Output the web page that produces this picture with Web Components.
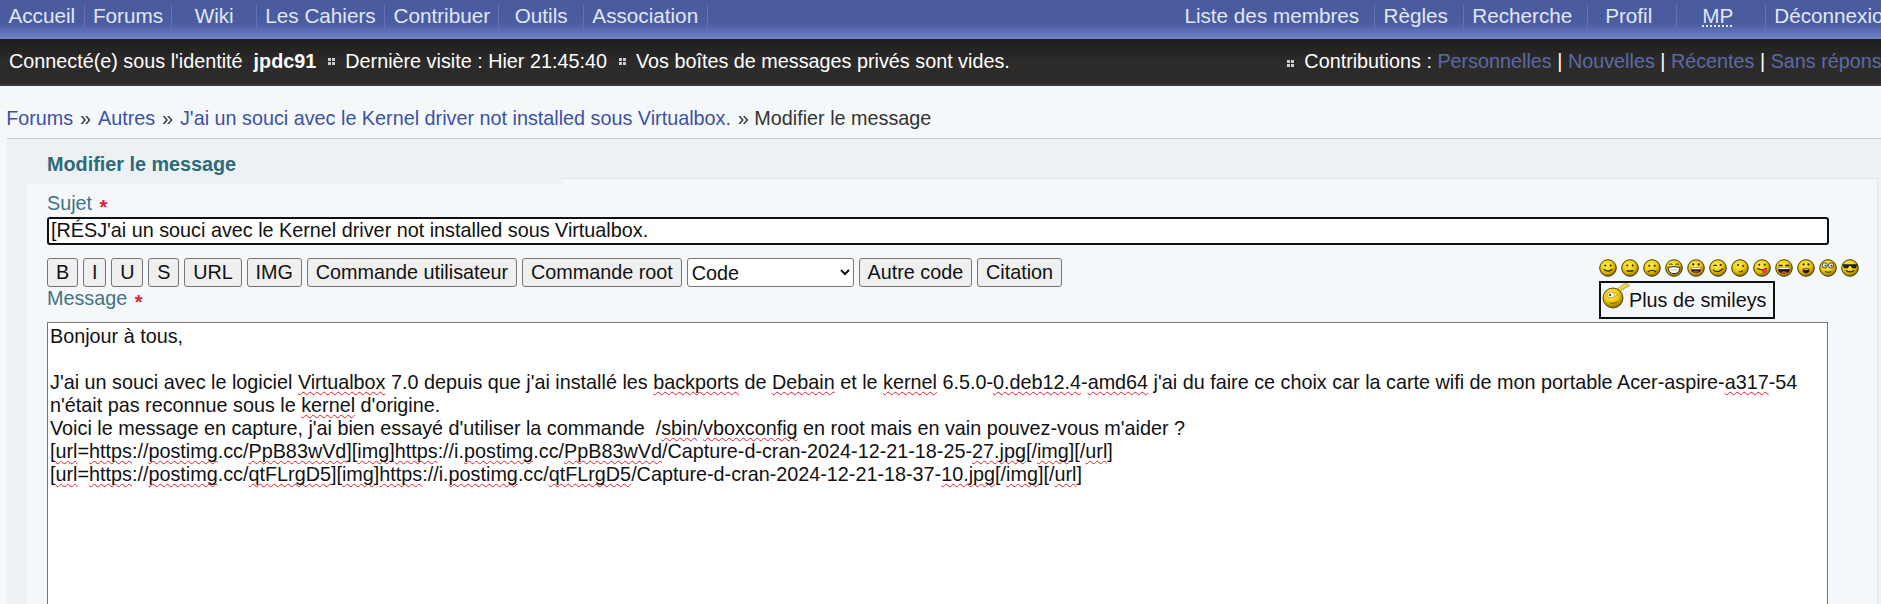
<!DOCTYPE html>
<html lang="fr">
<head>
<meta charset="utf-8">
<title>Modifier le message</title>
<style>
html, body { margin: 0; height: 604px; overflow: hidden; background: #f5f8fb; }
body { font: 19.8px/23px "Liberation Sans", Arial, sans-serif; color: #333; }
.s { text-decoration: underline wavy #e0202a 1px; text-underline-offset: 2px; text-decoration-skip-ink: none; }
</style>
</head>
<body>

<forum-shell>
  <site-nav>
    <nav-item>Accueil</nav-item>
    <nav-item>Forums</nav-item>
    <nav-item>Wiki</nav-item>
    <nav-item>Les Cahiers</nav-item>
    <nav-item>Contribuer</nav-item>
    <nav-item>Outils</nav-item>
    <nav-item>Association</nav-item>
    <nav-item slot="right">Liste des membres</nav-item>
    <nav-item slot="right">Règles</nav-item>
    <nav-item slot="right">Recherche</nav-item>
    <nav-item slot="right">Profil</nav-item>
    <nav-item slot="right"><abbr style="text-decoration: underline dotted">MP</abbr></nav-item>
    <nav-item slot="right">Déconnexion</nav-item>
  </site-nav>

  <status-bar>
    <span>Connecté(e) sous l'identité&nbsp; <b>jpdc91</b></span>
    <status-sep></status-sep>
    <span>Dernière visite : Hier 21:45:40</span>
    <status-sep></status-sep>
    <span>Vos boîtes de messages privés sont vides.</span>
    <span slot="right"><status-sep></status-sep>Contributions : <status-link>Personnelles</status-link> | <status-link>Nouvelles</status-link> | <status-link>Récentes</status-link> | <status-link>Sans réponses</status-link></span>
  </status-bar>

  <crumb-trail>
    <crumb-link>Forums</crumb-link> » <crumb-link>Autres</crumb-link> » <crumb-link>J'ai un souci avec le Kernel driver not installed sous Virtualbox.</crumb-link> » Modifier le message
  </crumb-trail>

  <edit-panel heading="Modifier le message">
    <field-label>Sujet</field-label>
    <subject-field>[RÉSJ'ai un souci avec le Kernel driver not installed sous Virtualbox.</subject-field>
    <post-toolbar>
      <tool-button>B</tool-button>
      <tool-button>I</tool-button>
      <tool-button>U</tool-button>
      <tool-button>S</tool-button>
      <tool-button>URL</tool-button>
      <tool-button>IMG</tool-button>
      <tool-button>Commande utilisateur</tool-button>
      <tool-button>Commande root</tool-button>
      <code-select></code-select>
      <tool-button>Autre code</tool-button>
      <tool-button>Citation</tool-button>
      <field-label slot="below">Message</field-label>
      <smiley-picker slot="side"></smiley-picker>
    </post-toolbar>
    <message-box>Bonjour à tous,

J'ai un souci avec le logiciel <span class="s">Virtualbox</span> 7.0 depuis que j'ai installé les <span class="s">backports</span> de <span class="s">Debain</span> et le <span class="s">kernel</span> 6.5.0-<span class="s">0.deb12.4</span>-<span class="s">amd64</span> j'ai du faire ce choix car la carte wifi de mon portable Acer-aspire-<span class="s">a317</span>-54 n'était pas reconnue sous le <span class="s">kernel</span> d'origine.
Voici le message en capture, j'ai bien essayé d'utiliser la commande  /<span class="s">sbin</span>/<span class="s">vboxconfig</span> en root mais en vain pouvez-vous m'aider ?
[<span class="s">url</span>=<span class="s">https</span>://<span class="s">postimg</span>.cc/<span class="s">PpB83wVd</span>][<span class="s">img</span>]<span class="s">https</span>://i.<span class="s">postimg</span>.cc/<span class="s">PpB83wVd</span>/Capture-d-cran-2024-12-21-18-25-<span class="s">27.jpg</span>[/<span class="s">img</span>][/<span class="s">url</span>]
[<span class="s">url</span>=<span class="s">https</span>://<span class="s">postimg</span>.cc/<span class="s">qtFLrgD5</span>][<span class="s">img</span>]<span class="s">https</span>://i.<span class="s">postimg</span>.cc/<span class="s">qtFLrgD5</span>/Capture-d-cran-2024-12-21-18-37-<span class="s">10.jpg</span>[/<span class="s">img</span>][/<span class="s">url</span>]</message-box>
  </edit-panel>
</forum-shell>

<script>
(function(){

// small helper so every element below reads the same way
function define(name, html, extra) {
  let template = document.createElement("template");
  template.innerHTML = html.trim();
  class El extends HTMLElement {
    constructor() {
      super();
      this.attachShadow({mode: "open"});
      this.shadowRoot.append(template.content.cloneNode(true));
    }
    connectedCallback() { if (extra) extra.call(this); }
  }
  customElements.define(name, El);
}

define("forum-shell", `
<style>:host { display: block; width: 1911px; height: 604px; overflow: hidden; }</style>
<slot></slot>`);

define("site-nav", `
<style>
:host {
  display: flex; justify-content: space-between; height: 39px;
  background: linear-gradient(#4a5a9e 0, #4c5ca1 24px, #6c80c8 38px, #7488cc 39px);
}
div { display: flex; }
</style>
<div><slot></slot></div>
<div><slot name="right"></slot></div>`);

define("nav-item", `
<style>
:host {
  display: block; box-sizing: border-box; min-width: 84.5px; height: 28px; margin-top: 4px; padding: 0 8.4px;
  font-size: 20.7px; line-height: 24px; text-align: center; color: #e0e7f6;
  border-right: 1px solid #6272b0; white-space: nowrap;
}
:host([slot=right]) { min-width: 89px; padding: 0 15px 0 8px; }
:host([slot=right]:first-child) { box-shadow: -1px 0 #6272b0; }
</style>
<slot></slot>`);

define("status-bar", `
<style>
:host {
  display: flex; justify-content: space-between; align-items: center; box-sizing: border-box;
  height: 47px; padding: 0 8.4px 1px 9px; color: #fff; white-space: nowrap;
  background: linear-gradient(#1f1d1d, #2d2a2a 50%);
  border-bottom: 2px solid #3b3b42;
}
div { display: flex; align-items: center; }
</style>
<div><slot></slot></div>
<div><slot name="right"></slot></div>`);

define("status-sep", `
<style>
:host { display: inline-block; width: 7px; height: 7px; margin: 0 10px 0 0; vertical-align: 1px;
  background:
    linear-gradient(#ccc, #ccc) 0 0/3px 3px no-repeat,
    linear-gradient(#ccc, #ccc) 4px 0/3px 3px no-repeat,
    linear-gradient(#ccc, #ccc) 0 4px/3px 3px no-repeat,
    linear-gradient(#ccc, #ccc) 4px 4px/3px 3px no-repeat; }
:host(:not([slot])) { margin: 0 10px 0 12px; }
</style>`);

define("status-link", `
<style>:host { color: #5a6aa8; }</style><slot></slot>`);

define("crumb-trail", `
<style>
:host { display: block; box-sizing: border-box; height: 52px; padding: 21px 0 0 4.8px; color: #333; white-space: nowrap; }
</style>
<slot></slot>`);

define("crumb-link", `
<style>:host { color: #3c50a8; margin: 0 1.4px; }</style><slot></slot>`);

define("edit-panel", `
<style>
:host { display: block; margin-left: 7px; width: 1899px; background: #ecf1f5; border-top: 1px solid #c6ced5; }
h2 {
  box-sizing: border-box; margin: 0 0 -6px 20px; width: 536px; height: 45px; padding: 14px 0 0 20px;
  position: relative; font-size: 19.8px; line-height: 23px; color: #2e6a78; background: #ecf1f5;
}
.inner {
  box-sizing: border-box; margin-left: 20px; width: 1851px; height: 500px; padding: 13px 49px 0 20px;
  background: #f5f8fb; border-top: 1px solid #e2e7ec; border-right: 1px solid #e2e7ec;
}
</style>
<h2></h2>
<div class="inner"><slot></slot></div>`, function() {
  this.shadowRoot.querySelector("h2").textContent = this.getAttribute("heading");
});

define("field-label", `
<style>
:host { display: block; color: #3f7484; height: 23px; }
i { font: bold 20px/0 "Liberation Sans", Arial, sans-serif; color: #d8213a; margin-left: 2px; vertical-align: -4px; }
</style>
<slot></slot> <i>*</i>`);

define("subject-field", `
<style>
:host {
  display: block; box-sizing: border-box; height: 28px; margin: 2px -1px 13px 0; padding: 0 2px;
  line-height: 23px; background: #fff; color: #111; border: 2px solid #111; border-radius: 3px; white-space: nowrap;
}
</style>
<slot></slot>`);

define("post-toolbar", `
<style>
:host { display: grid; grid-template-columns: 1fr auto; height: 64px; margin-right: -35px; }
.row { display: flex; gap: 5px; align-items: flex-start; height: 29px; }
</style>
<div>
  <div class="row"><slot></slot></div>
  <slot name="below"></slot>
</div>
<slot name="side"></slot>`);

define("tool-button", `
<style>
button {
  display: block; height: 29px; padding: 0 7.9px; font: 19.8px/23px "Liberation Sans", Arial, sans-serif; color: #111;
  background: #efefef; border: 1px solid #767676; border-radius: 3px;
}
</style>
<button><slot></slot></button>`);

define("code-select", `
<style>
select {
  display: block; box-sizing: border-box; width: 167px; height: 29px; font: 19.8px "Liberation Sans", Arial, sans-serif;
  color: #111; background: #fff; border: 1px solid #767676; border-radius: 3px;
}
</style>
<select><option>Code</option></select>`);

const FACE = {
  smile: `<circle cx="6.3" cy="6.6" r="1" fill="#2a2000"/><circle cx="11.7" cy="6.6" r="1" fill="#2a2000"/><path d="M4.6 10.2q4.4 4 8.8 0" fill="none" stroke="#2a2000" stroke-width="1.1"/>`,
  neutral: `<circle cx="6.3" cy="6.6" r="1" fill="#2a2000"/><circle cx="11.7" cy="6.6" r="1" fill="#2a2000"/><path d="M5.6 11.6q3.4 1 6.8 0" fill="none" stroke="#2a2000" stroke-width="1.1"/>`,
  sad: `<circle cx="6.3" cy="6.8" r="1" fill="#2a2000"/><circle cx="11.7" cy="6.8" r="1" fill="#2a2000"/><path d="M4.8 13q4.2-3.6 8.4 0" fill="none" stroke="#2a2000" stroke-width="1.1"/>`,
  teeth: `<path d="M4.4 5.6q1.6-1.6 3.2 0M10.4 5.6q1.6-1.6 3.2 0" fill="none" stroke="#2a2000"/><path d="M3 8.4q6-1.6 12 0q0 6.2-6 6.2t-6-6.2z" fill="#fff" stroke="#2a2000"/><path d="M4 11h10" stroke="#999" stroke-width=".6"/>`,
  grin: `<circle cx="6.3" cy="5.4" r="1.1" fill="#2a2000"/><circle cx="11.7" cy="5.4" r="1.1" fill="#2a2000"/><path d="M3.6 8.8h10.8q0 5.4-5.4 5.4t-5.4-5.4z" fill="#3a1410"/><path d="M4.2 9h9.6v1.3H4.2z" fill="#fff"/><path d="M6 12.6q3-1.4 6 0v1H6z" fill="#c8544a"/>`,
  wink: `<path d="M4.6 6.8q1.6-1.4 3.2 0" fill="none" stroke="#2a2000" stroke-width="1.1"/><circle cx="11.7" cy="6" r="1.1" fill="#2a2000"/><path d="M4 10.6q5 4.6 10-1.2" fill="none" stroke="#2a2000" stroke-width="1.1"/>`,
  confused: `<circle cx="7" cy="6" r="1" fill="#2a2000"/><circle cx="12.2" cy="7" r="1" fill="#2a2000"/><path d="M8 12.4q2.2 1.4 3.6-1.2" fill="none" stroke="#2a2000" stroke-width="1.1"/>`,
  tongue: `<circle cx="6.3" cy="5.8" r="1" fill="#2a2000"/><circle cx="11.7" cy="5.8" r="1" fill="#2a2000"/><path d="M4.2 9.6q5 2.4 9.6-.4" fill="none" stroke="#2a2000" stroke-width="1.1"/><path d="M8.6 10.6l5-1.2q1 4.4-2 5t-3-3.8z" fill="#e2403a"/>`,
  laugh: `<path d="M3.6 6.4h4.2M10.2 6.4h4.2" stroke="#2a2000" stroke-width="1.5"/><path d="M2.8 8.4h12.4q0 6.2-6.2 6.2t-6.2-6.2z" fill="#2a1410"/><path d="M3.4 8.6h11.2v1.5H3.4z" fill="#fff"/><path d="M6 13q3-1.6 6 0v1H6z" fill="#b8483e"/>`,
  shocked: `<circle cx="6.6" cy="5.4" r="1.1" fill="#2a2000"/><circle cx="11.4" cy="5.4" r="1.1" fill="#2a2000"/><path d="M5.6 9.6q3.4-1.6 6.8 0q.6 4.8-3.4 4.8t-3.4-4.8z" fill="#3a1410"/><path d="M6.4 9.6h5.2v1H6.4z" fill="#fff"/>`,
  glasses: `<circle cx="5.9" cy="6.4" r="2.6" fill="#eef0e0" stroke="#444"/><circle cx="12.1" cy="6.4" r="2.6" fill="#eef0e0" stroke="#444"/><circle cx="6.4" cy="6.6" r=".9" fill="#222"/><circle cx="12.6" cy="6.6" r=".9" fill="#222"/><path d="M6 12.6q3 1.4 6 0" fill="none" stroke="#2a2000" stroke-width="1.1"/>`,
  cool: `<path d="M2 5.2h14v1.6l-1.2 2.4h-3.6L9.6 7H8.4L6.8 9.2H3.2L2 6.8z" fill="#20201c"/><path d="M4.8 11.2q4.2 3.4 8.4 0" fill="none" stroke="#2a2000" stroke-width="1.1"/>`
};

let gradId = 0;
define("smiley-face", `
<style>:host { display: block; width: 18px; height: 18px; } svg { display: block; }</style>
<svg width="18" height="18" viewBox="0 0 18 18"></svg>`, function() {
  let id = "g" + (gradId++);
  this.shadowRoot.querySelector("svg").innerHTML = `
    <defs><radialGradient id="${id}" cx=".42" cy=".34" r=".7">
      <stop offset="0" stop-color="#fff25a"/><stop offset=".55" stop-color="#eec800"/><stop offset="1" stop-color="#7a5c00"/>
    </radialGradient></defs>
    <circle cx="9" cy="9" r="8.3" fill="url(#${id})" stroke="#3a2c00" stroke-width=".9"/>
    ${FACE[this.getAttribute("kind")]}`;
});

define("smiley-picker", `
<style>
:host { display: block; width: 264px; }
.faces { display: flex; gap: 4px; height: 23px; padding-top: 1px; box-sizing: border-box; }
.more {
  box-sizing: border-box; display: flex; width: 176px; height: 38px; padding: 0 0 0 1px;
  align-items: center; color: #111; background: #f5f8fb; border: 2px solid #111; white-space: nowrap;
}
svg { display: block; margin: -11px -1px 0 0; flex: none; }
</style>
<div class="faces"></div>
<div class="more">
  <svg width="28" height="28" viewBox="0 0 28 28">
    <defs><radialGradient id="big" cx=".42" cy=".34" r=".7">
      <stop offset="0" stop-color="#fff25a"/><stop offset=".55" stop-color="#eac600"/><stop offset="1" stop-color="#7a5c00"/>
    </radialGradient></defs>
    <path d="M13 10l10-8 4.5 2.2-1.2 1.6-1.6-.5-.5 1.8-1.8-.5-.5 1.9-1.9-.4L17 14z" fill="#e8d860" stroke="#a89220" stroke-width=".7"/>
    <circle cx="11" cy="17" r="10" fill="url(#big)" stroke="#3a2c00" stroke-width=".8"/>
    <ellipse cx="9" cy="14" rx="4" ry="2.8" fill="#fffbe8" stroke="#7a6a20" stroke-width=".5"/>
    <circle cx="8" cy="14" r="1.1" fill="#222"/><circle cx="13.5" cy="13.5" r="1.4" fill="#fffbe8" stroke="#7a6a20" stroke-width=".5"/>
    <path d="M8 22q4 1 7-1" fill="none" stroke="#5a4400" stroke-width=".9"/>
  </svg>
  <span>Plus de smileys</span>
</div>`, function() {
  let faces = this.shadowRoot.querySelector(".faces");
  ["smile", "neutral", "sad", "teeth", "grin", "wink", "confused", "tongue", "laugh", "shocked", "glasses", "cool"].forEach(kind => {
    let face = document.createElement("smiley-face");
    face.setAttribute("kind", kind);
    faces.append(face);
  });
});

define("message-box", `
<style>
:host {
  display: block; box-sizing: border-box; height: 320px; padding: 2px 2px 0 2px; color: #111;
  line-height: normal; background: #fff; border: 1px solid #767676; white-space: pre-wrap;
}
</style><slot></slot>`);

})()
</script>
</body>
</html>
